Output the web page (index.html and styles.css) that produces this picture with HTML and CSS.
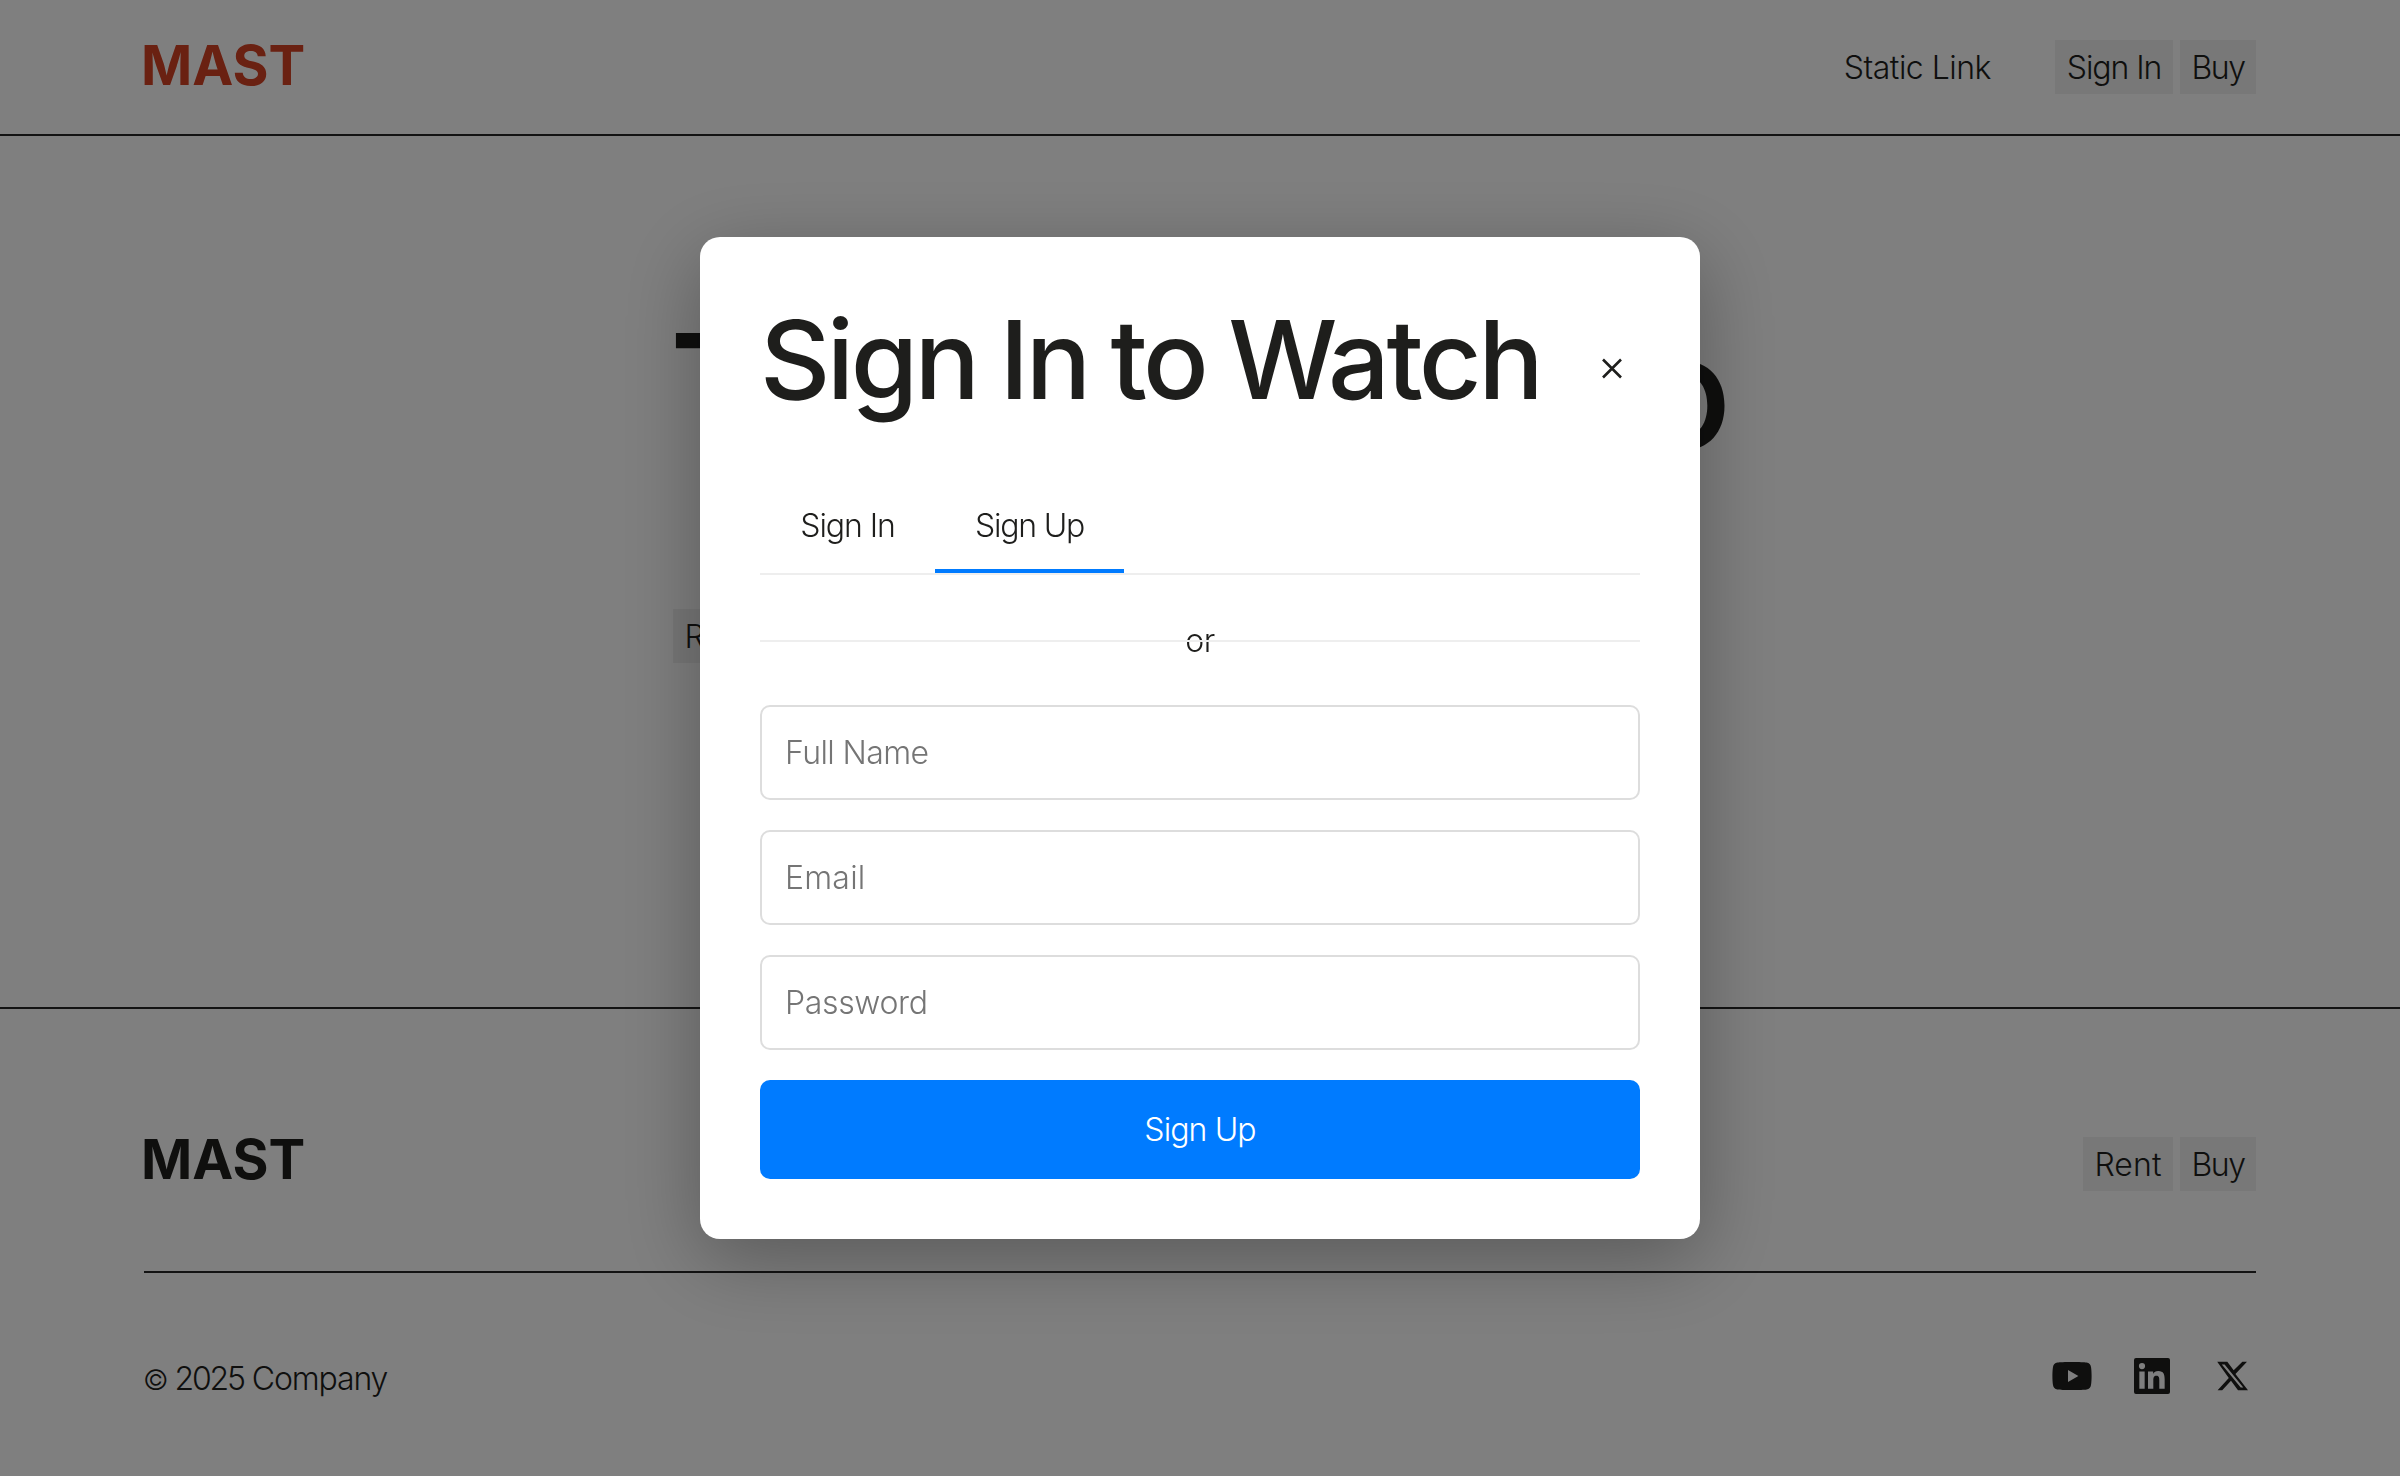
FILE: index.html
```html
<!DOCTYPE html>
<html lang="en">
<head>
<meta charset="utf-8">
<title>MAST</title>
<link rel="stylesheet" href="styles.css">
</head>
<body>
<div class="page">
  <header class="site-header">
    <div class="logo logo-brand">MAST</div>
    <nav class="nav">
      <a class="nav-link">Static Link</a>
      <div class="chips chips-nav">
        <a class="chip chip-signin">Sign In</a>
        <a class="chip chip-buy">Buy</a>
      </div>
    </nav>
  </header>
  <main class="hero">
    <h1 class="hero-title"><span>T</span><span>o</span></h1>
    <div class="chips">
      <a class="chip chip-rent">Rent</a>
      <a class="chip chip-buy">Buy</a>
    </div>
  </main>
  <footer class="site-footer">
    <div class="footer-top">
      <div class="logo logo-footer">MAST</div>
      <div class="chips">
        <a class="chip chip-rent">Rent</a>
        <a class="chip chip-buy">Buy</a>
      </div>
    </div>
    <div class="footer-bottom">
      <div class="copyright"><span class="mark">©</span> <span class="year">2025</span> <span class="company">Company</span></div>
      <div class="social">
        <svg class="icon" viewBox="0 0 24 24"><path fill-rule="evenodd" d="M12 5c3.600 0 6.200.1 7.300.3 1.300.2 2 .9 2.200 2.200.2 1.100.3 2.800.3 4.500s-.1 3.400-.3 4.500c-.2 1.300-.9 2-2.200 2.200-1.100.2-3.700.3-7.300.3s-6.200-.1-7.300-.3c-1.300-.2-2-.9-2.200-2.200-.2-1.100-.3-2.800-.3-4.500s.1-3.400.3-4.500c.2-1.300.9-2 2.200-2.200C5.800 5.100 8.400 5 12 5zM10 9v6l5.200-3z"/></svg>
        <svg class="icon" viewBox="0 0 24 24"><path fill-rule="evenodd" d="M4 3h16a1 1 0 0 1 1 1v16a1 1 0 0 1-1 1H4a1 1 0 0 1-1-1V4a1 1 0 0 1 1-1zM5.670 9.750v8.580h2.660V9.750zM7 5.500A1.550 1.550 0 1 0 7 8.600 1.550 1.550 0 1 0 7 5.500zM10 9.750v8.580h2.660v-4.250c0-1.120.21-2.200 1.600-2.200 1.370 0 1.390 1.280 1.390 2.280v4.170h2.680v-4.710c0-2.310-.5-4.080-3.200-4.080-1.300 0-2.170.7-2.520 1.380h-.04V9.750z"/></svg>
        <svg class="icon" viewBox="0 0 24 24"><path fill-rule="evenodd" d="M17.180 4.900h2.300l-5.750 6.050L20 19.100h-5l-3.500-4.700-4.400 4.700H4.800l5.600-6.100L4.600 4.900h5.050l3.200 4.250zM16.350 17.700h1.300L8.300 6.200H6.900z"/></svg>
      </div>
    </div>
  </footer>
</div>

<div class="overlay">
  <section class="modal">
    <div class="modal-header">
      <h2 class="modal-title">Sign In to Watch</h2>
      <button class="close" type="button" aria-label="Close">
        <svg class="close-icon" viewBox="0 0 22 22"><path d="M2 1.500l18 18M20 1.500L2 19.500"/></svg>
      </button>
    </div>
    <div class="tabs">
      <a class="tab tab-signin">Sign In</a>
      <a class="tab tab-signup active">Sign Up</a>
    </div>
    <div class="divider"><span class="or">or</span></div>
    <form class="form">
      <input class="field field-name" type="text" placeholder="Full Name">
      <input class="field field-email" type="email" placeholder="Email">
      <input class="field field-password" type="password" placeholder="Password">
      <button class="submit" type="button">Sign Up</button>
    </form>
  </section>
</div>
</body>
</html>
```
FILE: styles.css
```css
* { box-sizing: border-box; }

body {
  margin: 0;
  font: 300 32px/38px Inter, "Liberation Sans", sans-serif;
  color: #1e1e1c;
  background: #fff;
}

h1, h2 { margin: 0; font-weight: 500; }

.page {
  height: 1476px;
  display: flex;
  flex-direction: column;
  overflow: hidden;
}

/* Header */
.site-header {
  height: 136px;
  padding: 0 144px;
  border-bottom: 2px solid #262626;
  display: flex;
  align-items: center;
  justify-content: space-between;
}
.logo {
  font-size: 55px;
  line-height: 60px;
  font-weight: 700;
  margin-left: -3px;
}
.logo-brand { color: #d44224; padding-bottom: 4px; }
.logo-footer { padding-bottom: 10px; }
.nav { display: flex; align-items: center; gap: 64px; }
.nav-link { letter-spacing: -.5px; padding-top: 2px; }

.chips { display: flex; gap: 7px; }
.chip {
  height: 54px;
  line-height: 56px;
  text-align: center;
  background: #f0f0f0;
}
.chip-signin { width: 118px; letter-spacing: -1.100px; }
.chip-buy { width: 76px; letter-spacing: -1.500px; }
.chip-rent { width: 90px; letter-spacing: .1px; }

/* Hero */
.hero {
  height: 871px;
  width: 1058px;
  margin: 0 auto;
  padding-top: 160px;
}
.hero-title {
  font-size: 158px;
  line-height: 190px;
  letter-spacing: -5px;
  display: flex;
  justify-content: space-between;
  margin: 0 2px 123px -2px;
}
.hero .chips { padding-left: 2px; }

/* Footer */
.site-footer {
  flex: 1;
  border-top: 2px solid #262626;
  padding: 0 144px;
}
.footer-top {
  height: 264px;
  padding-top: 128px;
  border-bottom: 2px solid #262626;
  display: flex;
  align-items: flex-start;
  justify-content: space-between;
}
.footer-top .logo { margin-top: -8px; }
.footer-bottom {
  padding-top: 79px;
  display: flex;
  align-items: center;
  justify-content: space-between;
}
.copyright { padding-top: 6px; margin-left: -1px; }
.mark { font-size: 28px; letter-spacing: -1px; }
.year { letter-spacing: -2.200px; margin-left: -2px; }
.company { letter-spacing: -1.150px; margin-left: -1px; }
.social { display: flex; gap: 32px; }
.icon { width: 48px; height: 48px; fill: currentColor; }

/* Dialog */
.overlay {
  position: fixed;
  inset: 0;
  background: rgba(0, 0, 0, .5);
  display: flex;
  align-items: center;
  justify-content: center;
}
.modal {
  width: 1000px;
  height: 1002px;
  padding: 60px;
  border-radius: 20px;
  background: #fff;
  box-shadow: 0 20px 80px rgba(0, 0, 0, .3);
}
.modal-header {
  height: 124px;
  margin-bottom: 60px;
  display: flex;
  align-items: center;
  justify-content: space-between;
}
.modal-title {
  font-size: 109px;
  line-height: 124px;
  letter-spacing: -3.600px;
  word-spacing: -2.500px;
}
.close {
  width: 56px;
  height: 56px;
  margin-top: 20px;
  padding: 0;
  border: 0;
  background: none;
  display: flex;
  align-items: center;
  justify-content: center;
}
.close-icon {
  width: 22px;
  height: 22px;
  fill: none;
  stroke: #1e1e1c;
  stroke-width: 2.600;
}

.tabs {
  height: 94px;
  border-bottom: 2px solid #eee;
  display: flex;
}
.tab {
  height: 92px;
  line-height: 89px;
  text-align: center;
  border-bottom: 4px solid transparent;
}
.tab-signin { width: 175px; letter-spacing: -1.100px; }
.tab-signup { width: 189px; letter-spacing: -1.200px; }
.tab.active { border-bottom-color: #007bff; }

.divider {
  position: relative;
  height: 38px;
  line-height: 40px;
  margin: 46px 0;
  text-align: center;
}
.or { letter-spacing: -.5px; }
.divider::after {
  content: "";
  position: absolute;
  left: 0;
  right: 0;
  top: 19px;
  height: 2px;
  background: #eee;
}

.form { display: flex; flex-direction: column; gap: 30px; }
.field {
  height: 95px;
  padding: 0 23px;
  border: 2px solid #ddd;
  border-radius: 10px;
  background: #fff;
  font: inherit;
}
.field::placeholder { color: #757575; }
.field-name { letter-spacing: -.6px; }
.field-email { letter-spacing: .2px; }
.field-password { letter-spacing: -.35px; }
.submit {
  height: 99px;
  border: 0;
  border-radius: 10px;
  background: #007bff;
  color: #fff;
  font: inherit;
  letter-spacing: -.9px;
}
```
